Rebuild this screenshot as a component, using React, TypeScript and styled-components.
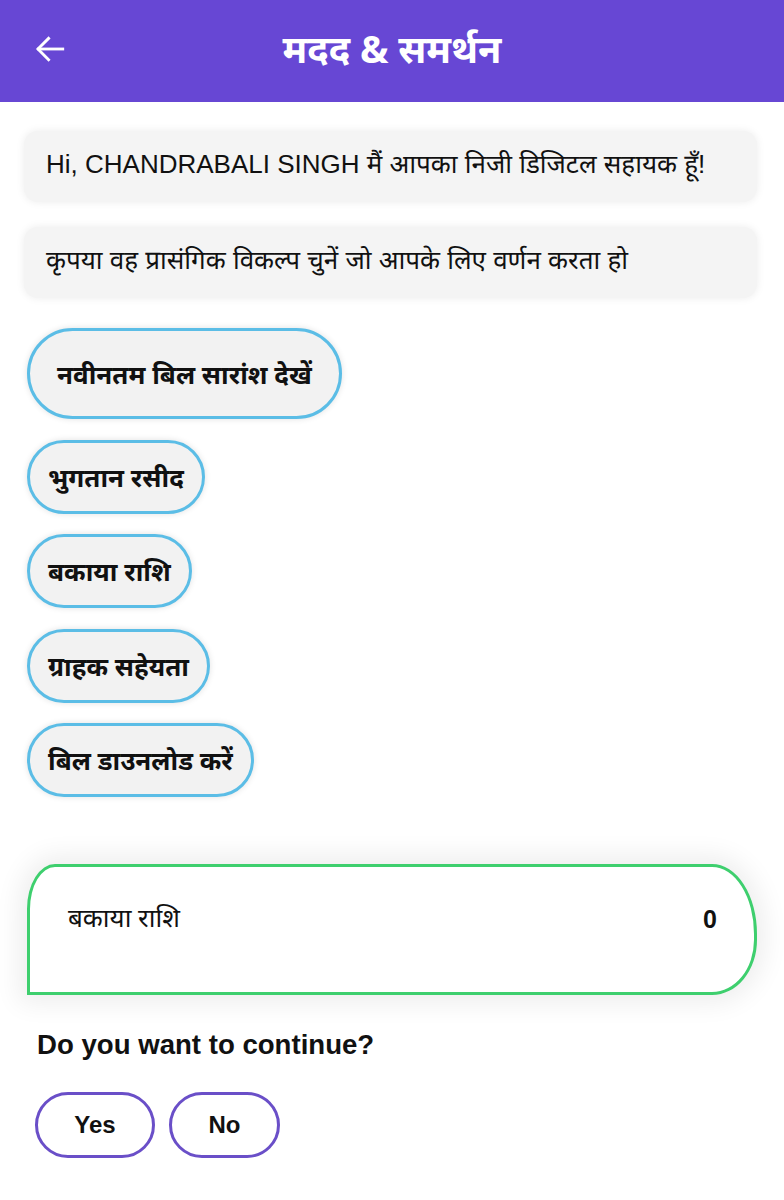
import React from "react";
import styled, { createGlobalStyle } from "styled-components";

const GlobalStyle = createGlobalStyle`
  * { box-sizing: border-box; }
  body {
    margin: 0;
    background: #ffffff;
    font-family: "Noto Sans", "Noto Sans Devanagari", "Lohit Devanagari", sans-serif;
    color: #111;
  }
`;

const Page = styled.div`
  width: 784px;
  min-height: 1200px;
  background: #fff;
`;

const Header = styled.header`
  height: 102px;
  background: #6747d4;
  display: grid;
  grid-template-columns: 1fr auto 1fr;
  align-items: center;
  padding: 0 30px;
`;

const BackButton = styled.button`
  background: none;
  border: none;
  padding: 0;
  width: 40px;
  height: 40px;
  display: flex;
  align-items: center;
  justify-content: center;
  cursor: pointer;
  margin-bottom: 4px;
`;

const Title = styled.h1`
  margin: 0 0 6px;
  text-align: center;
  color: #fff;
  font-size: 38px;
  font-weight: 700;
`;

const Body = styled.main`
  padding: 29px 27px 40px 24px;
  display: flex;
  flex-direction: column;
`;

const Bubble = styled.div`
  background: #f4f4f4;
  border-radius: 14px;
  box-shadow: 0 0 8px rgba(0, 0, 0, 0.08);
  padding: 0 22px;
  height: 71px;
  display: flex;
  align-items: center;
  font-family: "Liberation Sans", "Noto Sans Devanagari", "Noto Sans", sans-serif;
  font-size: 26px;
  margin-bottom: 25px;
`;

const OptionList = styled.div`
  display: flex;
  flex-direction: column;
  align-items: flex-start;
  gap: 20.5px;
  padding-left: 3px;
  margin-top: 5px;
`;

const Option = styled.button<{ $large?: boolean }>`
  background: #f2f2f2;
  border: 3px solid #5bbde6;
  border-radius: 999px;
  box-shadow: 0 0 6px rgba(0, 0, 0, 0.12);
  height: ${(p) => (p.$large ? "91px" : "74px")};
  padding: 0 ${(p) => (p.$large ? "27px" : "18px")};
  font-family: "Noto Sans", "Noto Sans Devanagari", sans-serif;
  font-size: 26px;
  font-weight: 700;
  color: #111;
  cursor: pointer;
`;

const SummaryCard = styled.div`
  margin-top: 67px;
  margin-left: 3px;
  height: 131px;
  border: 3px solid #3ecf6e;
  border-radius: 28px 45px 45px 0 / 45px 70px 55px 0;
  background: #fff;
  box-shadow: 0 0 26px 8px rgba(0, 0, 0, 0.07);
  display: flex;
  justify-content: space-between;
  padding: 32px 37px 0 38px;
  font-size: 26px;
`;

const SummaryLabel = styled.span`
  font-family: "Noto Sans", "Noto Sans Devanagari", sans-serif;
`;

const SummaryValue = styled.span`
  font-family: "Liberation Sans", Arial, sans-serif;
  font-weight: 700;
  font-size: 25px;
  padding-top: 6px;
`;

const Question = styled.h2`
  margin: 34px 0 0 13px;
  font-family: "Liberation Sans", Arial, sans-serif;
  font-size: 27.6px;
  font-weight: 700;
`;

const ChoiceRow = styled.div`
  display: flex;
  gap: 14px;
  margin: 31px 0 0 11px;
`;

const Choice = styled.button<{ $width: number }>`
  width: ${(p) => p.$width}px;
  height: 66px;
  border: 3px solid #6a4fc8;
  border-radius: 999px;
  background: #fff;
  font-family: "Liberation Sans", Arial, sans-serif;
  font-size: 24px;
  font-weight: 700;
  color: #111;
  cursor: pointer;
`;

const options = [
  "भुगतान रसीद",
  "बकाया राशि",
  "ग्राहक सहेयता",
  "बिल डाउनलोड करें",
];

export default function App() {
  return (
    <Page>
      <GlobalStyle />
      <Header>
        <BackButton aria-label="back">
          <svg width="34" height="34" viewBox="0 0 24 24" fill="none" stroke="#fff" strokeWidth="2" strokeLinecap="square">
            <path d="M21 12H4" />
            <path d="M11 4.5L3.5 12 11 19.5" />
          </svg>
        </BackButton>
        <Title>मदद &amp; समर्थन</Title>
        <span />
      </Header>
      <Body>
        <Bubble>Hi, CHANDRABALI SINGH मैं आपका निजी डिजिटल सहायक हूँ!</Bubble>
        <Bubble>कृपया वह प्रासंगिक विकल्प चुनें जो आपके लिए वर्णन करता हो</Bubble>
        <OptionList>
          <Option $large>नवीनतम बिल सारांश देखें</Option>
          {options.map((o) => (
            <Option key={o}>{o}</Option>
          ))}
        </OptionList>
        <SummaryCard>
          <SummaryLabel>बकाया राशि</SummaryLabel>
          <SummaryValue>0</SummaryValue>
        </SummaryCard>
        <Question>Do you want to continue?</Question>
        <ChoiceRow>
          <Choice $width={120}>Yes</Choice>
          <Choice $width={111}>No</Choice>
        </ChoiceRow>
      </Body>
    </Page>
  );
}
